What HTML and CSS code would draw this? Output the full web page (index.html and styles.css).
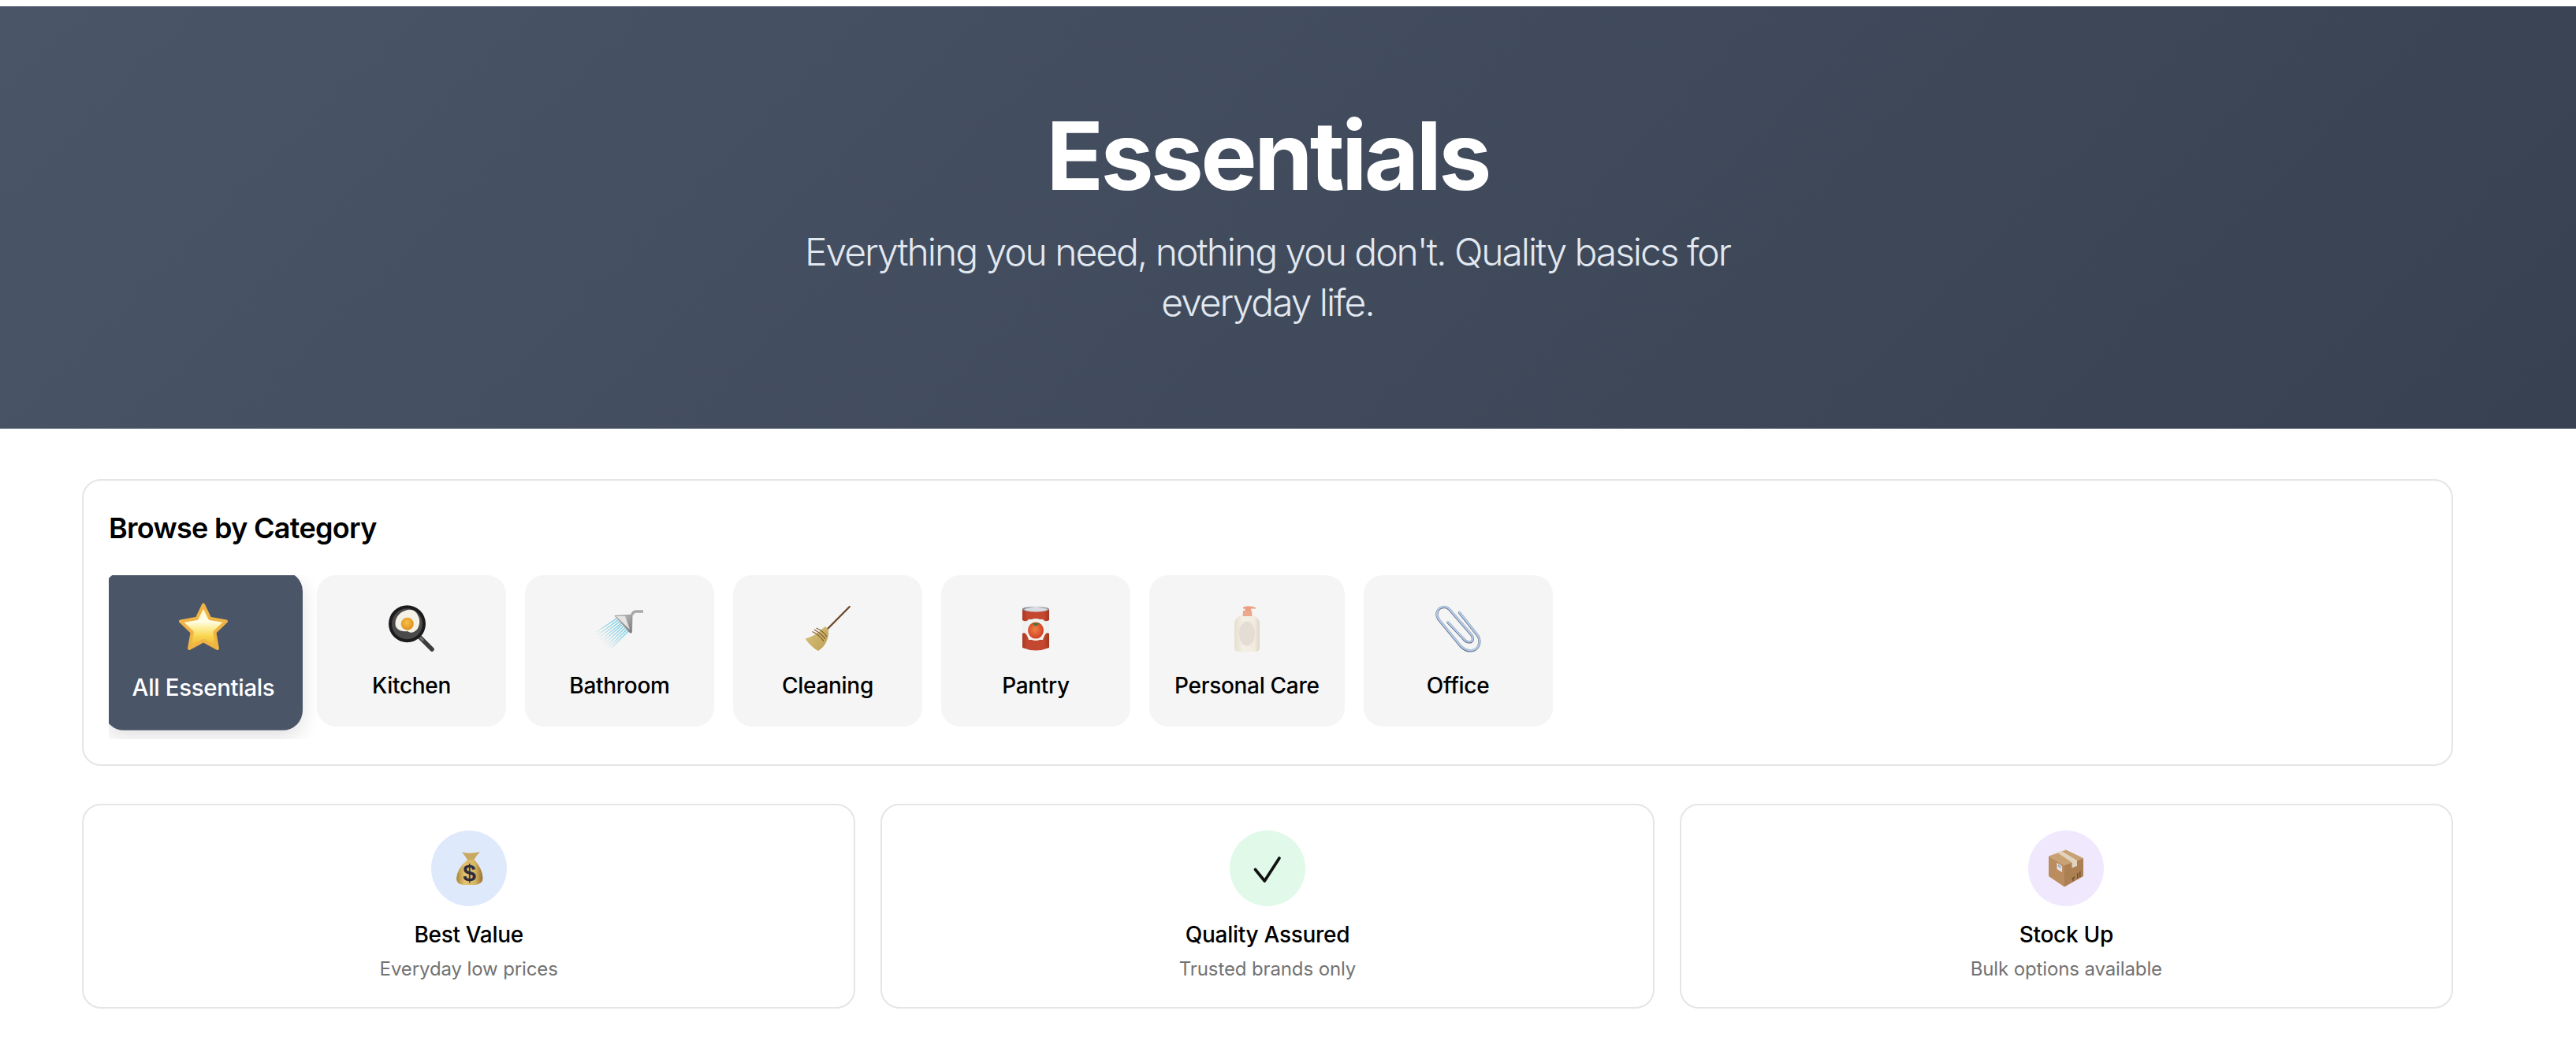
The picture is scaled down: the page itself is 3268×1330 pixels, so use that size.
FILE: index.html
```html
<!DOCTYPE html>
<html lang="en">
<head>
<meta charset="utf-8">
<title>Essentials</title>
<link rel="stylesheet" href="styles.css">
</head>
<body>
<header class="hero">
  <div class="hero-inner">
    <h1 class="hero-title">Essentials</h1>
    <p class="hero-sub">Everything you need, nothing you don't. Quality basics for everyday life.</p>
  </div>
</header>
<main class="main">
  <section class="card browse">
    <h2 class="browse-title">Browse by Category</h2>
    <div class="tiles">
      <div class="tile tile-active">
        <div class="tile-icon">
          <svg class="emoji" viewBox="0 0 60 60"><defs><linearGradient id="st" x1="0" y1="0" x2="0" y2="1"><stop offset="0" stop-color="#fff6bf"/><stop offset=".38" stop-color="#fffde6"/><stop offset=".52" stop-color="#fdf0a0"/><stop offset=".72" stop-color="#f9d650"/><stop offset="1" stop-color="#eeaa2e"/></linearGradient></defs>
            <path d="M30 2.500 L37.800 18.800 L57.500 22.300 L43.600 35.500 L47 55 L30 45.800 L13 55 L16.400 35.500 L2.500 22.300 L22.200 18.800 Z" fill="url(#st)" stroke="#efb445" stroke-width="4" stroke-linejoin="round"/></svg>
        </div>
        <span class="tile-label">All Essentials</span>
      </div>
      <div class="tile">
        <div class="tile-icon">
          <svg class="emoji" viewBox="0 0 60 60"><defs><radialGradient id="yk" cx=".45" cy=".4" r=".6"><stop offset="0" stop-color="#f6c24a"/><stop offset="1" stop-color="#e08f1c"/></radialGradient></defs>
            <path d="M41 41 L56 56" stroke="#3c3c3c" stroke-width="5.5" stroke-linecap="round"/><path d="M39 39 L45 45" stroke="#777" stroke-width="2.5"/>
            <circle cx="24.5" cy="23.7" r="23.5" fill="#1b1b1b"/><circle cx="24.5" cy="23.7" r="19.5" fill="#4a4a4a"/>
            <path d="M22 7 C29 4 36 7 38 13 C42 19 40 27 37 31 C33 35 29 36 25 33 C20 34 13 33 10 27 C8 20 12 10 22 7 Z" fill="#f4f1e6"/>
            <circle cx="24.8" cy="23.7" r="8" fill="url(#yk)"/></svg>
        </div>
        <span class="tile-label">Kitchen</span>
      </div>
      <div class="tile">
        <div class="tile-icon">
          <svg class="emoji" viewBox="0 0 60 60"><defs><linearGradient id="wt" gradientUnits="userSpaceOnUse" x1="36" y1="22" x2="6" y2="50"><stop offset="0" stop-color="#5cc8e4"/><stop offset=".55" stop-color="#a9dbe8"/><stop offset="1" stop-color="#d8dfe2" stop-opacity="0"/></linearGradient><linearGradient id="hd" x1="0" y1="0" x2="1" y2="1"><stop offset="0" stop-color="#d4d4d4"/><stop offset=".6" stop-color="#9a9a9a"/><stop offset="1" stop-color="#777"/></linearGradient></defs>
            <g stroke="url(#wt)" stroke-width="1.3" fill="none"><path d="M26 17 L1 34"/><path d="M28 19 L2 38"/><path d="M30 21 L4 41"/><path d="M32 23 L6 44"/><path d="M33 25 L8 47"/><path d="M35 27 L10 50"/><path d="M37 29 L13 52"/><path d="M39 31 L16 54"/><path d="M41 33 L19 55"/></g>
            <path d="M60 8 L51 8 Q47 8 45.5 13" stroke="#a8a8a8" stroke-width="3.4" fill="none"/>
            <path d="M24 13.5 L44 12.5 L46 14 L45.5 35 L43 35 Z" fill="url(#hd)" stroke="#8a8a8a" stroke-width=".8" stroke-linejoin="round"/><path d="M26 14 L37 14 L43 31 Z" fill="#e4e4e4"/></svg>
        </div>
        <span class="tile-label">Bathroom</span>
      </div>
      <div class="tile">
        <div class="tile-icon">
          <svg class="emoji" viewBox="0 0 60 60"><defs><linearGradient id="br" x1="0" y1="0" x2="1" y2="1"><stop offset="0" stop-color="#d9c57c"/><stop offset="1" stop-color="#bd9f55"/></linearGradient></defs>
            <path d="M57.7 2 L29 31" stroke="#6f4a2c" stroke-width="2.4" stroke-linecap="round"/>
            <path d="M22 31 L27 27 L31 31 L31 37 C30 46 25 54 18 58 C11 54 5 48 1.7 42.5 C8 41 16 37 22 31 Z" fill="url(#br)"/>
            <path d="M10.500 36.500 C16 39 22 44 25 49" stroke="#7d5a30" stroke-width="1.2" fill="none" transform="translate(0,-3)"/><path d="M13 34 C18 37 24 41 27 46" stroke="#7d5a30" stroke-width="1.2" fill="none" transform="translate(0,-3)"/><path d="M15.500 32 C20 34 26 38 29 43" stroke="#7d5a30" stroke-width="1.2" fill="none" transform="translate(0,-3)"/></svg>
        </div>
        <span class="tile-label">Cleaning</span>
      </div>
      <div class="tile">
        <div class="tile-icon">
          <svg class="emoji" viewBox="0 0 60 60"><defs><linearGradient id="cn" x1="0" y1="0" x2="1" y2="0"><stop offset="0" stop-color="#a83a24"/><stop offset=".2" stop-color="#c4482f"/><stop offset=".8" stop-color="#c4482f"/><stop offset="1" stop-color="#a2361f"/></linearGradient><radialGradient id="tm" cx=".45" cy=".45" r=".6"><stop offset="0" stop-color="#ef8043"/><stop offset="1" stop-color="#cf3b22"/></radialGradient><linearGradient id="lid" x1="0" y1="0" x2="1" y2="0"><stop offset="0" stop-color="#76797f"/><stop offset=".5" stop-color="#dfe2e7"/><stop offset="1" stop-color="#8c9096"/></linearGradient></defs>
            <path d="M13 5 L47 5 L47 54 Q30 61 13 54 Z" fill="url(#cn)"/>
            <ellipse cx="30" cy="5" rx="17" ry="3.600" fill="url(#lid)"/><ellipse cx="30" cy="5.600" rx="14.500" ry="2.400" fill="#d9dce2"/>
            <path d="M13 19 Q18 22 21 18 L39 18 Q42 22 47 19 L47 36 Q42 33 39 44 L21 44 Q18 33 13 36 Z" fill="#eef1ee"/>
            <ellipse cx="30" cy="31" rx="13" ry="14" fill="#f2f3f0"/>
            <ellipse cx="30" cy="32" rx="10" ry="10.500" fill="url(#tm)"/><path d="M25 23 L35 23 L31 26 L29 26 Z" fill="#3f7a35"/></svg>
        </div>
        <span class="tile-label">Pantry</span>
      </div>
      <div class="tile tile-wide">
        <div class="tile-icon">
          <svg class="emoji" viewBox="0 0 60 60"><defs><linearGradient id="bt" x1="0" y1="0" x2="1" y2="0"><stop offset="0" stop-color="#e6dfd1"/><stop offset=".35" stop-color="#f4efe5"/><stop offset=".8" stop-color="#f1ebe0"/><stop offset="1" stop-color="#ddd5c6"/></linearGradient></defs>
            <path d="M25 2.500 Q33 0 41 3 L41 4.500 L35 4.500 L35 7 L27.500 7 L27.500 4.500 L25 4.500 Z" fill="#eb9f80"/>
            <path d="M25 7 L36 7 L36.500 14 L24.500 14 Z" fill="#eba88b"/>
            <path d="M20 14 L40 14 Q46 17 46 24 L46 54 Q46 59 41 59 L19 59 Q14 59 14 54 L14 24 Q14 17 20 14 Z" fill="url(#bt)"/>
            <ellipse cx="30" cy="36" rx="10" ry="15.500" fill="#e5dcd4"/></svg>
        </div>
        <span class="tile-label">Personal Care</span>
      </div>
      <div class="tile">
        <div class="tile-icon">
          <svg class="emoji" viewBox="0 0 60 60"><g fill="none" stroke-linecap="round" stroke-linejoin="round"><path d="M31.500 9.500 L55 39 C59 46 56 55 50 57 C44 59 38 57 33 52 L5 18 C1 12 3 5 9 3 C14 1 18 4 21 8 L47 38 C50 43 48 47 44 47 C41 47 38 45 36 42 L17 22" stroke="#5f6d84" stroke-width="3.200"/><path d="M31.500 9 L55 38.500 C59 45.500 56 54.500 50 56.500 C44 58.500 38 56.500 33 51.500 L5 17.500 C1 11.500 3 4.500 9 2.500 C14 .5 18 3.500 21 7.500 L47 37.500 C50 42.500 48 46.500 44 46.500 C41 46.500 38 44.500 36 41.500 L17 21.500" stroke="#b4cbe8" stroke-width="2.200"/></g></svg>
        </div>
        <span class="tile-label">Office</span>
      </div>
    </div>
  </section>
  <section class="features">
    <div class="card feature">
      <div class="feature-circle circle-blue">
        <svg class="emoji-sm" viewBox="0 0 48 48"><defs><linearGradient id="bg" x1="0" y1="0" x2="1" y2="0"><stop offset="0" stop-color="#a88433"/><stop offset=".3" stop-color="#e0c272"/><stop offset=".7" stop-color="#d8b664"/><stop offset="1" stop-color="#94712a"/></linearGradient></defs>
          <path d="M15 3.500 Q24 6 38 3 Q33 8 30.500 13 L22 13 Q19 8 15 3.500 Z" fill="#c9a861"/>
          <path d="M22 13 L31 13 Q41 25 41.500 36 Q41.500 44 32 45 L17 45 Q8 44 8 37 Q9 24 22 13 Z" fill="url(#bg)"/>
          <text class="bag-sign" x="24.600" y="39.500" text-anchor="middle">$</text></svg>
      </div>
      <div class="feature-title">Best Value</div>
      <div class="feature-sub">Everyday low prices</div>
    </div>
    <div class="card feature">
      <div class="feature-circle circle-green">
        <svg class="emoji-sm" viewBox="0 0 48 48"><path d="M8.500 25.500 L20.300 40 L39 11" fill="none" stroke="#111" stroke-width="3.700" stroke-linecap="round" stroke-linejoin="round"/></svg>
      </div>
      <div class="feature-title">Quality Assured</div>
      <div class="feature-sub">Trusted brands only</div>
    </div>
    <div class="card feature">
      <div class="feature-circle circle-purple">
        <svg class="emoji-sm" viewBox="0 0 48 48">
          <path d="M24 .5 L46 11 L22 20 L2 8.500 Z" fill="#c9a274"/>
          <path d="M2 8.500 L22 20 L22 47.500 L2 34 Z" fill="#bb8d5e"/>
          <path d="M22 20 L46 11 L46 34 L22 47.500 Z" fill="#ac8053"/>
          <path d="M13 4 L18 1.800 L38 14 L38 21 L31.500 23.500 L31.500 16.600 Z" fill="#e2d3bf"/>
          <path d="M12.500 17 L19 21 L19 29 L12.500 25 Z" fill="#dfe3ea"/><path d="M14 19 L17.500 21.500 L17.500 24 L14 21.500 Z" fill="#9aa6b5"/>
          <path d="M31 37 L35 34 L35 36 L33.500 38 L33.500 40 L32.500 40.500 L32.500 38.500 Z M38 30.500 L39.500 29.500 L39.500 36.500 L38 37.500 Z M41 28.500 L42.500 27.500 L42.500 34.500 L41 35.500 Z" fill="#6f5033"/></svg>
      </div>
      <div class="feature-title">Stock Up</div>
      <div class="feature-sub">Bulk options available</div>
    </div>
  </section>
</main>
</body>
</html>
```
FILE: styles.css
```css
* { box-sizing: border-box; }
html, body { margin: 0; padding: 0; }
body {
  padding-top: 8px;
  background: #fff;
  color: #000;
  font-family: Inter, "Liberation Sans", sans-serif;
  overflow: hidden;
}
.hero {
  background: linear-gradient(135deg, #4a5568, #374151);
  color: #fff;
}
.hero-inner {
  width: 3216px;
  padding: 128px 104px;
  text-align: center;
}
.hero-title {
  margin: 0 0 30px;
  padding-top: 2px;
  font-size: 120px;
  line-height: 120px;
  font-weight: 700;
  letter-spacing: -3.8px;
}
.hero-sub {
  margin: 0 auto;
  max-width: 1344px;
  font-size: 48px;
  line-height: 64px;
  font-weight: 300;
  letter-spacing: -2.05px;
  color: #e2e8f0;
}
.main {
  width: 3216px;
  padding: 64px 104px 0;
}
.card {
  background: #fff;
  border: 2px solid #e5e5e5;
  border-radius: 24px;
}
.browse {
  padding: 32px;
  margin-bottom: 48px;
}
.browse-title {
  margin: 0 0 32px;
  font-size: 36px;
  line-height: 56px;
  font-weight: 600;
  letter-spacing: -0.7px;
}
.tiles {
  display: flex;
  gap: 24px;
  padding-bottom: 16px;
  overflow: hidden;
}
.tile {
  flex: none;
  min-width: 240px;
  height: 192px;
  padding: 32px;
  display: flex;
  flex-direction: column;
  align-items: center;
  background: #f5f5f5;
  border-radius: 24px;
}
.tile-active {
  background: #4a5568;
  color: #fff;
  transform: scale(1.05);
  box-shadow: 0 8px 24px rgba(0, 0, 0, 0.12);
}
.tile-icon {
  height: 72px;
  margin-bottom: 16px;
  display: flex;
  align-items: center;
  justify-content: center;
}
.tile-label {
  font-size: 28px;
  line-height: 40px;
  font-weight: 450;
  letter-spacing: -0.3px;
  white-space: nowrap;
}
.emoji { width: 60px; height: 60px; display: block; }
.emoji-sm { width: 48px; height: 48px; display: block; }
.features {
  display: grid;
  grid-template-columns: repeat(3, 1fr);
  gap: 32px;
}
.feature {
  padding: 32px;
  display: flex;
  flex-direction: column;
  align-items: center;
  height: 260px;
}
.feature-circle {
  width: 96px;
  height: 96px;
  margin-bottom: 16px;
  border-radius: 50%;
  display: flex;
  align-items: center;
  justify-content: center;
}
.circle-blue { background: #dfe9fc; }
.circle-green { background: #e0f9e8; }
.circle-purple { background: #f0e8fd; }
.feature-title {
  font-size: 28px;
  line-height: 40px;
  font-weight: 450;
  letter-spacing: -0.3px;
  margin-bottom: 8px;
}
.feature-sub {
  font-size: 24px;
  line-height: 32px;
  letter-spacing: -0.12px;
  color: #737373;
}
.bag-sign {
  font-family: "Liberation Sans", sans-serif;
  font-size: 30px;
  font-weight: 700;
  fill: #2e2c3c;
}
```
